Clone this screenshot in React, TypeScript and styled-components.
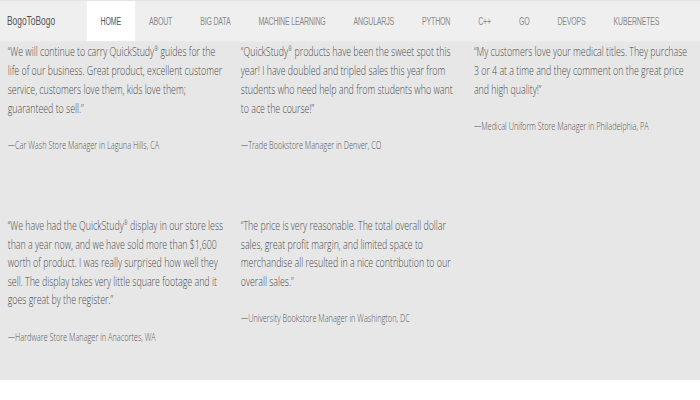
import React from "react";
import styled, { createGlobalStyle } from "styled-components";

const Global = createGlobalStyle`
  html, body { margin: 0; padding: 0; background: #ffffff; overflow: hidden; }
  body { font-family: "Open Sans", "Noto Sans", sans-serif; }
`;

/* The reference page is a 1000px-wide layout shown squeezed into 700px */
const Page = styled.div`
  width: 1000px;
  transform: scaleX(0.7);
  transform-origin: 0 0;
`;

const Nav = styled.nav`
  display: flex;
  align-items: stretch;
  height: 42px;
  background: #efefef;
  border-top: 1px solid #e4e4e4;
  border-bottom: 1px solid #eaeaea;
  box-sizing: border-box;
`;

const Brand = styled.div`
  display: flex;
  align-items: center;
  padding: 0 45px 0 10px;
  font-family: "Liberation Sans Narrow", "Liberation Sans", sans-serif;
  font-size: 12px;
  color: #555;
  white-space: nowrap;
`;

const NavList = styled.ul`
  display: flex;
  list-style: none;
  margin: 0;
  padding: 0;
`;

const NavItem = styled.li<{ $active?: boolean }>`
  display: flex;
  align-items: center;
  padding: 0 20px;
  white-space: nowrap;
  background: ${(p) => (p.$active ? "#ffffff" : "transparent")};
  font-family: "Liberation Sans Narrow", "Liberation Sans", sans-serif;
  font-size: 10px;
  letter-spacing: -0.25px;
  color: ${(p) => (p.$active ? "#555" : "#8a8a8a")};
`;

const Content = styled.main`
  background: #e7e7e7;
  padding: 0 0 33px 11px;
  display: grid;
  grid-template-columns: repeat(3, 333px);
  row-gap: 62px;
`;

const Card = styled.div`
  padding-right: 19px;
`;

const Quote = styled.p<{ $lh: number }>`
  margin: 0 0 18px 0;
  font-size: 12.6px;
  line-height: ${(p) => p.$lh}px;
  font-weight: 300;
  color: #4a4a4a;
`;

const Sup = styled.sup`
  font-size: 7px;
  line-height: 0;
`;

const Author = styled.p`
  margin: 0;
  font-size: 10.5px;
  line-height: 19px;
  font-weight: 300;
  color: #555;
`;

const navItems = [
  "HOME",
  "ABOUT",
  "BIG DATA",
  "MACHINE LEARNING",
  "ANGULARJS",
  "PYTHON",
  "C++",
  "GO",
  "DEVOPS",
  "KUBERNETES",
];

type T = { q: React.ReactNode; a: string; lh: number };

const QS = (
  <>
    QuickStudy<Sup>®</Sup>
  </>
);

const testimonials: T[] = [
  {
    q: (
      <>
        “We will continue to carry {QS} guides for the life of our business. Great product, excellent customer service, customers love them, kids love them; guaranteed to sell.”
      </>
    ),
    a: "—Car Wash Store Manager in Laguna Hills, CA",
    lh: 19,
  },
  {
    q: (
      <>
        “{QS} products have been the sweet spot this year! I have doubled and tripled sales this year from students who need help and from students who want to ace the course!”
      </>
    ),
    a: "—Trade Bookstore Manager in Denver, CO",
    lh: 19,
  },
  {
    q: (
      <>“My customers love your medical titles. They purchase 3 or 4 at a time and they comment on the great price and high quality!”</>
    ),
    a: "—Medical Uniform Store Manager in Philadelphia, PA",
    lh: 19,
  },
  {
    q: (
      <>
        “We have had the {QS} display in our store less than a year now, and we have sold more than $1,600 worth of product. I was really surprised how well they sell. The display takes very little square footage and it goes great by the register.”
      </>
    ),
    a: "—Hardware Store Manager in Anacortes, WA",
    lh: 18.6,
  },
  {
    q: (
      <>“The price is very reasonable. The total overall dollar sales, great profit margin, and limited space to merchandise all resulted in a nice contribution to our overall sales.”</>
    ),
    a: "—University Bookstore Manager in Washington, DC",
    lh: 18.6,
  },
];

export default function App() {
  return (
    <Page>
      <Global />
      <Nav>
        <Brand>BogoToBogo</Brand>
        <NavList>
          {navItems.map((n, i) => (
            <NavItem key={n} $active={i === 0}>
              {n}
            </NavItem>
          ))}
        </NavList>
      </Nav>
      <Content>
        {testimonials.map((t) => (
          <Card key={t.a}>
            <Quote $lh={t.lh}>{t.q}</Quote>
            <Author>{t.a}</Author>
          </Card>
        ))}
      </Content>
    </Page>
  );
}
